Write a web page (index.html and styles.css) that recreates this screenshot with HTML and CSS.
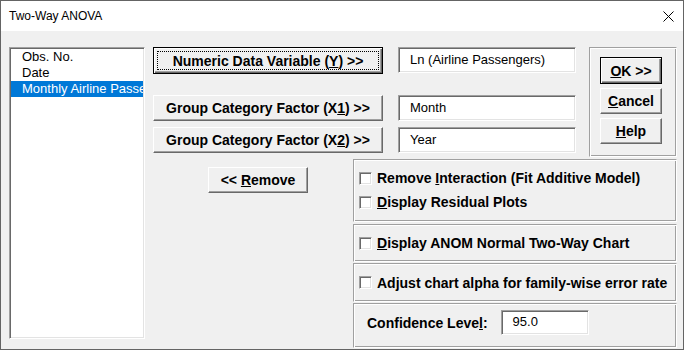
FILE: index.html
```html
<!DOCTYPE html>
<html lang="en">
<head>
    <meta charset="UTF-8">
    <title>Two-Way ANOVA</title>
    <link rel="stylesheet" href="styles.css">
</head>
<body>

<div class="window">
    <div class="titlebar">
        <span class="title">Two-Way ANOVA</span>
        <svg class="close" viewBox="0 0 11 11" width="11" height="11">
            <path d="M0.5 0.5 L10.5 10.5 M10.5 0.5 L0.5 10.5" stroke="#000" stroke-width="1" fill="none"/>
        </svg>
    </div>
    <div class="client">
        <div class="listbox">
            <div class="item">Obs. No.</div>
            <div class="item">Date</div>
            <div class="item selected">Monthly Airline Passengers</div>
        </div>
        <div class="main">
            <div class="top">
                <div class="fields">
                    <button class="btn wide default"><span class="focus"><span>Numeric Data Variable (<u>Y</u>) &gt;&gt;</span></span></button>
                    <div class="textbox"><span>Ln (Airline Passengers)</span></div>
                    <button class="btn wide"><span>Group Category Factor (X<u>1</u>) &gt;&gt;</span></button>
                    <div class="textbox"><span>Month</span></div>
                    <button class="btn wide"><span>Group Category Factor (X<u>2</u>) &gt;&gt;</span></button>
                    <div class="textbox"><span>Year</span></div>
                </div>
                <div class="group actions">
                    <button class="btn small default"><span><u>O</u>K &gt;&gt;</span></button>
                    <button class="btn small"><span><u>C</u>ancel</span></button>
                    <button class="btn small"><span><u>H</u>elp</span></button>
                </div>
            </div>
            <div class="bottom">
                <div class="remove-area">
                    <button class="btn remove"><span>&lt;&lt; <u>R</u>emove</span></button>
                </div>
                <div class="options">
                    <div class="group box-model">
                        <div class="check"><span class="checkbox"></span><span>Remove <u>I</u>nteraction (Fit Additive Model)</span></div>
                        <div class="check"><span class="checkbox"></span><span><u>D</u>isplay Residual Plots</span></div>
                    </div>
                    <div class="group box-single box-anom">
                        <div class="check"><span class="checkbox"></span><span><u>D</u>isplay ANOM Normal Two-Way Chart</span></div>
                    </div>
                    <div class="group box-single box-alpha">
                        <div class="check"><span class="checkbox"></span><span>Adjust chart alpha for family-wise error rate</span></div>
                    </div>
                    <div class="group box-conf">
                        <span class="label"><span>Confidence Leve<u>l</u>:</span></span>
                        <div class="textbox conf"><span>95.0</span></div>
                    </div>
                </div>
            </div>
        </div>
    </div>
</div>

</body>
</html>
```

FILE: styles.css
```css
* {
    box-sizing: border-box;
}
body {
    margin: 0;
    font-family: "Liberation Sans", Arial, sans-serif;
    color: #000;
}
.window {
    width: 684px;
    height: 350px;
    border: 1px solid #646464;
    background: #f0f0f0;
    display: flex;
    flex-direction: column;
}
.titlebar {
    height: 30px;
    flex: none;
    background: #fff;
    display: flex;
    align-items: center;
    justify-content: space-between;
    padding: 0 9px 0 8px;
}
.title {
    font-size: 12px;
}
.close {
    display: block;
}
.client {
    flex: 1;
    display: flex;
    align-items: flex-start;
    padding: 16px 6px 0 8px;
}
.listbox {
    width: 136px;
    height: 292px;
    margin-right: 8px;
    background: #fff;
    border: 1px solid;
    border-color: #a0a0a0 #fff #fff #a0a0a0;
    box-shadow: inset 1px 1px #696969, inset -1px -1px #e3e3e3;
    padding: 1px 1px 0 1px;
    overflow: hidden;
}
.item {
    height: 16px;
    line-height: 16px;
    font-size: 13px;
    padding-left: 11px;
    white-space: nowrap;
    overflow: hidden;
}
.item.selected {
    background: #0078d7;
    color: #fff;
}
.main {
    width: 524px;
    display: flex;
    flex-direction: column;
}
.top {
    display: flex;
    align-items: flex-start;
}
.fields {
    display: grid;
    grid-template-columns: 230px 178px;
    grid-template-rows: 48px 32px 26px;
    column-gap: 15px;
    align-items: start;
}
.btn {
    font-family: "Liberation Sans", Arial, sans-serif;
    font-size: 14px;
    font-weight: bold;
    color: #000;
    height: 26px;
    padding: 0;
    background: #f0f0f0;
    border: 1px solid;
    border-color: #fff #696969 #696969 #fff;
    box-shadow: inset -1px -1px #a0a0a0, inset 1px 1px #f0f0f0;
    display: flex;
    align-items: center;
    justify-content: center;
    white-space: nowrap;
}
.btn.default {
    height: 27px;
    border: 1px solid #000;
    box-shadow: inset 1px 1px #fff, inset -1px -1px #696969, inset -2px -2px #a0a0a0;
}
.btn.wide {
    width: 230px;
}
.btn .focus {
    flex: 1;
    align-self: stretch;
    margin: 3px;
    border: 1px dotted #000;
    display: flex;
    align-items: center;
    justify-content: center;
}
.textbox {
    height: 26px;
    background: #fff;
    border: 1px solid;
    border-color: #a0a0a0 #fff #fff #a0a0a0;
    box-shadow: inset 1px 1px #696969, inset -1px -1px #e3e3e3;
    font-size: 13px;
    padding: 0 10px 2px 11px;
    display: flex;
    align-items: center;
    white-space: nowrap;
}
.group {
    border: 1px solid;
    border-color: #a0a0a0 #fff #fff #a0a0a0;
    box-shadow: inset 1px 1px #fff, inset -1px -1px #a0a0a0;
}
.actions {
    margin-left: 13px;
    width: 88px;
    height: 110px;
    padding: 9px 0 0 10px;
    display: flex;
    flex-direction: column;
    gap: 4px;
}
.btn.small {
    width: 62px;
}
.bottom {
    display: flex;
    margin-top: 2px;
}
.remove-area {
    width: 200px;
    padding: 8px 0 0 55px;
}
.btn.remove {
    width: 100px;
}
.options {
    width: 324px;
    display: flex;
    flex-direction: column;
}
.check {
    height: 20px;
    display: flex;
    align-items: center;
    font-size: 14px;
    font-weight: bold;
    white-space: nowrap;
}
.checkbox {
    width: 13px;
    height: 13px;
    margin-right: 5px;
    background: #fff;
    border: 1px solid;
    border-color: #a0a0a0 #fff #fff #a0a0a0;
    box-shadow: inset 1px 1px #696969, inset -1px -1px #e3e3e3;
}
.box-model {
    height: 63px;
    padding: 8px 0 0 5px;
    display: flex;
    flex-direction: column;
    gap: 4px;
}
.box-single {
    display: flex;
    align-items: center;
    padding-left: 5px;
}
.box-anom {
    height: 38px;
    margin-top: 2px;
}
.box-alpha {
    height: 39px;
    margin-top: 1px;
}
.box-conf {
    height: 45px;
    margin-top: 1px;
    padding: 6px 0 0 13px;
    display: flex;
    align-items: flex-start;
}
.label {
    height: 25px;
    display: flex;
    align-items: center;
    font-size: 14px;
    font-weight: bold;
    margin-right: 13px;
    white-space: nowrap;
}
.textbox.conf {
    width: 88px;
    height: 25px;
    padding-left: 11px;
}
```
